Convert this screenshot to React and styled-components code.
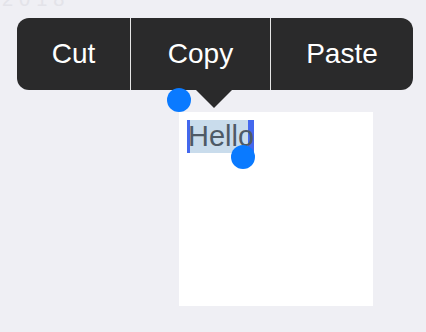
import React from 'react';
import styled, {createGlobalStyle} from 'styled-components';

const Global = createGlobalStyle`
    html, body {
        margin: 0;
        padding: 0;
        background: #efeff4;
        font-family: "Liberation Sans", Arial, sans-serif;
    }
`;

const Page = styled.div`
    width: 426px;
    height: 332px;
    overflow: hidden;
    display: flex;
    flex-direction: column;
`;

// faint label peeking out at the top edge
const Ghost = styled.div`
    margin-top: -11px;
    height: 18px;
    padding-left: 2px;
    font-size: 20px;
    letter-spacing: 6px;
    color: #e3e3e9;
    line-height: 20px;
`;

const Menu = styled.div`
    position: relative;
    display: flex;
    align-self: flex-start;
    margin: 11px 0 0 17px;
    height: 72px;
    background: #2a2a2b;
    border-radius: 12px;

    &::after {
        content: '';
        position: absolute;
        left: 179px;
        top: 72px;
        border-left: 18px solid transparent;
        border-right: 18px solid transparent;
        border-top: 18px solid #2a2a2b;
    }
`;

const Item = styled.div`
    width: ${p => p.w}px;
    display: flex;
    align-items: center;
    justify-content: center;
    color: #ffffff;
    font-size: 28px;
    border-left: ${p => p.first ? 'none' : '1px solid #e6e6e6'};
`;

const Editor = styled.div`
    margin: 22px 0 0 179px;
    width: 194px;
    height: 194px;
    background: #ffffff;
    padding: 8px;
    box-sizing: border-box;
    display: flex;
    align-items: flex-start;
`;

const Selection = styled.div`
    position: relative;
    display: flex;
    align-items: center;
    width: 58px;
    height: 33px;
    background: #c9dcec;
    border-left: 3px solid #4468ee;
    border-right: 6px solid #4468ee;
`;

const Word = styled.span`
    margin-left: -2px;
    color: #4e5a66;
    font-size: 29px;
    line-height: 33px;
    white-space: nowrap;
`;

const Knob = styled.span`
    position: absolute;
    width: 24px;
    height: 24px;
    border-radius: 50%;
    background: #0a7aff;
    left: ${p => p.x}px;
    top: ${p => p.y}px;
`;

export default function App() {
    return (
        <Page>
            <Global/>
            <Ghost>2018</Ghost>
            <Menu>
                <Item w={113} first>Cut</Item>
                <Item w={139}>Copy</Item>
                <Item w={142}>Paste</Item>
            </Menu>
            <Editor>
                <Selection>
                    <Word>Hello</Word>
                    <Knob x={-23} y={-32}/>
                    <Knob x={41} y={25}/>
                </Selection>
            </Editor>
        </Page>
    );
}
